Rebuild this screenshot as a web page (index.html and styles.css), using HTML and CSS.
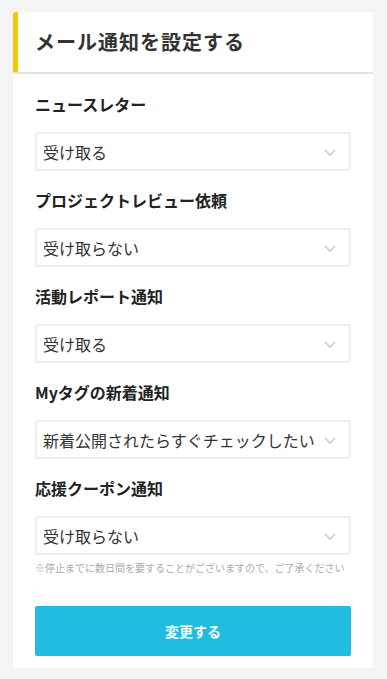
FILE: index.html
```html
<!DOCTYPE html>
<html lang="ja">
<head>
<meta charset="utf-8">
<title>メール通知を設定する</title>
<link rel="stylesheet" href="styles.css">
</head>
<body>
<div class="card">
  <div class="card-header">
    <h1 class="title">メール通知を設定する</h1>
  </div>
  <div class="card-body">
    <div class="field">
      <div class="label">ニュースレター</div>
      <div class="select"><span>受け取る</span><svg class="chev" width="12" height="7" viewBox="0 0 12 7"><path d="M1 1l5 5 5-5" fill="none" stroke="#c9c9c9" stroke-width="1.6"/></svg></div>
    </div>
    <div class="field">
      <div class="label">プロジェクトレビュー依頼</div>
      <div class="select"><span>受け取らない</span><svg class="chev" width="12" height="7" viewBox="0 0 12 7"><path d="M1 1l5 5 5-5" fill="none" stroke="#c9c9c9" stroke-width="1.6"/></svg></div>
    </div>
    <div class="field">
      <div class="label">活動レポート通知</div>
      <div class="select"><span>受け取る</span><svg class="chev" width="12" height="7" viewBox="0 0 12 7"><path d="M1 1l5 5 5-5" fill="none" stroke="#c9c9c9" stroke-width="1.6"/></svg></div>
    </div>
    <div class="field">
      <div class="label">Myタグの新着通知</div>
      <div class="select"><span>新着公開されたらすぐチェックしたい</span><svg class="chev" width="12" height="7" viewBox="0 0 12 7"><path d="M1 1l5 5 5-5" fill="none" stroke="#c9c9c9" stroke-width="1.6"/></svg></div>
    </div>
    <div class="field">
      <div class="label">応援クーポン通知</div>
      <div class="select"><span>受け取らない</span><svg class="chev" width="12" height="7" viewBox="0 0 12 7"><path d="M1 1l5 5 5-5" fill="none" stroke="#c9c9c9" stroke-width="1.6"/></svg></div>
      <p class="note">※停止までに数日間を要することがございますので、ご了承ください</p>
    </div>
    <button class="submit" type="button">変更する</button>
  </div>
</div>
</body>
</html>
```
FILE: styles.css
```css
* { box-sizing: border-box; }
html, body { margin: 0; padding: 0; }
body {
  background: #f4f4f4;
  font-family: "Noto Sans CJK JP", "Noto Sans", sans-serif;
  color: #333;
  padding: 12px 14px 11px 13px;
}
.card {
  background: #fff;
  border-radius: 3px;
  width: 360px;
  overflow: hidden;
}
.card-header {
  height: 62px;
  border-left: 5px solid #f7c600;
  border-bottom: 2px solid #e3e3e3;
  padding-left: 17px;
  display: flex;
  align-items: center;
}
.card-header {
  border-left: 0;
  box-shadow: inset 5px 0 0 #f7c600;
  padding-left: 22px;
}
.title {
  margin: 0;
  font-size: 20px;
  font-weight: bold;
  letter-spacing: 1px;
  line-height: 28px;
  color: #333;
}
.card-body {
  padding: 18px 22px 12px;
  display: flex;
  flex-direction: column;
  gap: 17px;
}
.field {
  display: flex;
  flex-direction: column;
}
.label {
  font-size: 16px;
  font-weight: bold;
  line-height: 24px;
  color: #222;
  margin-bottom: 16px;
}
.select {
  height: 39px;
  border: 2px solid #eeeeee;
  border-radius: 3px;
  display: flex;
  align-items: center;
  justify-content: space-between;
  padding: 0 13px 0 6px;
  font-size: 16px;
  color: #333;
}
.chev { display: block; margin-top: 1px; }
.note {
  margin: 5px 0 0;
  font-size: 10px;
  line-height: 15px;
  color: #aaa;
  white-space: nowrap;
}
.submit {
  margin-top: 14px;
  height: 50px;
  width: 100%;
  border: 0;
  border-radius: 2px;
  background: #20bde0;
  color: #fff;
  font-family: inherit;
  font-size: 14px;
  font-weight: bold;
}
```
